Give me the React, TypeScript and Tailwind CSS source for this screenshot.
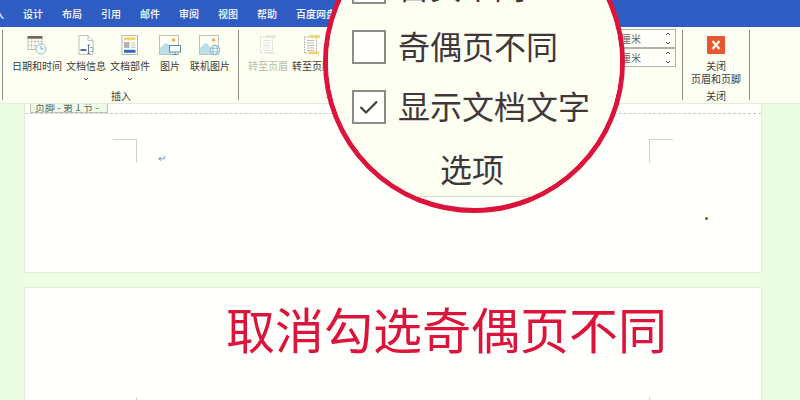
import { useState } from 'react'
import type { ReactNode } from 'react'

const TABS = ['插入', '设计', '布局', '引用', '邮件', '审阅', '视图', '帮助', '百度网盘']

function CalendarIcon() {
  return (
    <svg width="20" height="20" viewBox="0 0 20 20" fill="none">
      <path d="M1 3h14v11.500H1z" fill="#fffff8" stroke="#b4b4a8" strokeWidth="0.800" />
      <path d="M1 6.500h14M1 10.500h14M4.500 3v11.500M8 3v11.500M11.500 3v11.500" stroke="#c9b9a8" strokeWidth="0.600" />
      <path d="M0.500 1h15v2.600h-15z" fill="#6f6660" />
      <circle cx="14" cy="14" r="5" fill="#f8fffb" stroke="#94bfd4" strokeWidth="1" />
      <path d="M14 10.800V14h2.800" stroke="#7fa8bf" strokeWidth="1" />
    </svg>
  )
}

function DocInfoIcon() {
  return (
    <svg width="20" height="20" viewBox="0 0 20 20" fill="none">
      <path d="M3 0.500h9l5 5V19.500H3z" fill="#fffffb" stroke="#b5bbb3" strokeWidth="0.900" />
      <path d="M12 0.500v5h5" stroke="#b5bbb3" strokeWidth="0.900" />
      <path d="M4.500 15h6" stroke="#3b5f94" strokeWidth="1.800" />
      <path d="M12.500 10v8.500M11.500 10h2.500M11.500 18.500h2.500" stroke="#5f7482" strokeWidth="1" />
      <path d="M14 12.500h3v4h-3" stroke="#8ea0aa" strokeWidth="0.800" />
    </svg>
  )
}

function DocPartsIcon() {
  return (
    <svg width="20" height="20" viewBox="0 0 20 20" fill="none">
      <path d="M2 0.500h15.500v19H2z" fill="#fffffb" stroke="#a9b0aa" strokeWidth="0.900" />
      <path d="M4 2.300h11.500v3H4z" fill="#f4d56c" />
      <path d="M4 7h5.500v6H4z" fill="#b4b4b0" />
      <path d="M11 8h4.500M11 10.200h4.500M11 12.400h4.500" stroke="#b9b9ae" strokeWidth="0.800" />
      <path d="M4 14.800h11.500v3H4z" fill="#3767bd" />
    </svg>
  )
}

function PhotoBase() {
  return (
    <>
      <path d="M0.500 0.500h19v19H0.500z" fill="#fffff8" stroke="#b9bbb0" strokeWidth="0.900" />
      <circle cx="14.500" cy="5" r="1.800" fill="#f1b24c" />
      <path d="M1 19v-6l6-5.500 4 4 2 7.500z" fill="#b9dfea" />
    </>
  )
}

function PictureIcon() {
  return (
    <svg width="22" height="20" viewBox="0 0 22 20" fill="none">
      <PhotoBase />
      <path d="M10.500 10.500h11v6.500h-11z" fill="#fafffc" stroke="#5b8fb0" strokeWidth="1.100" />
      <path d="M16 17v2.400M13 19.400h6" stroke="#5b8fb0" strokeWidth="1" />
    </svg>
  )
}

function OnlinePictureIcon() {
  return (
    <svg width="22" height="20" viewBox="0 0 22 20" fill="none">
      <PhotoBase />
      <circle cx="16" cy="15" r="4.800" fill="#effaf8" stroke="#84b0c2" strokeWidth="0.900" />
      <ellipse cx="16" cy="15" rx="2.200" ry="4.800" stroke="#84b0c2" strokeWidth="0.800" />
      <path d="M11.500 13.300h9M11.500 16.700h9" stroke="#84b0c2" strokeWidth="0.800" />
    </svg>
  )
}

function GotoIcon({ band, line, bottom }: { band: string; line: string; bottom?: boolean }) {
  return (
    <svg width="18" height="20" viewBox="0 0 18 20" fill="none">
      <path d="M1.500 2h12v16h-12z" fill="#fffffb" stroke={line} strokeWidth="0.900" strokeDasharray="1.500 1" />
      <path d="M4 5.500h7M4 8h7M4 10.500h7M4 13h7M4 15.500h7" stroke={line} strokeWidth="0.700" />
      <path d="M6 0.200h11v2.600H6z" fill={band} />
      <path d={bottom ? 'M5 16.500h11v2.600H5z' : 'M7 17h9v1.600H7z'} fill={band} />
    </svg>
  )
}

function CloseIcon() {
  return (
    <svg width="18" height="20" viewBox="0 0 18 20" fill="none">
      <rect y="1" width="18" height="18" rx="1" fill="#e9552f" />
      <path d="M5.500 6l7 8M12.500 6l-7 8" stroke="#fff6ee" strokeWidth="2.400" />
    </svg>
  )
}

function Chevron({ up }: { up?: boolean }) {
  return (
    <svg width="6" height="4" viewBox="0 0 6 4" fill="none">
      <path d={up ? 'M1 3l2-2 2 2' : 'M1 1l2 2 2-2'} stroke="#4a4a48" strokeWidth="1" />
    </svg>
  )
}

interface ToolProps {
  icon: ReactNode
  label: string
  width?: string
  menu?: boolean
  disabled?: boolean
}

function Tool({ icon, label, width = 'w-10', menu, disabled }: ToolProps) {
  return (
    <button
      type="button"
      disabled={disabled}
      className={`flex shrink-0 flex-col items-center whitespace-nowrap disabled:text-[#b5bdae] ${width}`}
    >
      {icon}
      <span className="mt-1 leading-[14px]">{label}</span>
      {menu && (
        <span className="mt-1">
          <Chevron />
        </span>
      )}
    </button>
  )
}

function Group({ title, className, children }: { title: string; className: string; children: ReactNode }) {
  return (
    <section className={`flex h-[70px] flex-col border-l border-[#8b8f86] pt-[5px] ${className}`}>
      <div className="flex flex-1 gap-1">{children}</div>
      <h2 className="text-center leading-[8px]">{title}</h2>
    </section>
  )
}

function Spinner({ label, initial }: { label: string; initial: string }) {
  const [value, setValue] = useState(initial)
  return (
    <div className="flex h-[19px] w-24 items-center border border-[#b0b3aa] bg-[#fffffa] pr-1">
      <input
        aria-label={label}
        value={value}
        onChange={e => setValue(e.target.value)}
        className="min-w-0 flex-1 pr-6 text-right leading-[14px] text-[#666] outline-none"
      />
      <div className="flex flex-col gap-[5px]">
        <button type="button" aria-label="增加">
          <Chevron up />
        </button>
        <button type="button" aria-label="减少">
          <Chevron />
        </button>
      </div>
    </div>
  )
}

function Option({ label, initial = false }: { label: string; initial?: boolean }) {
  const [checked, setChecked] = useState(initial)
  return (
    <label className="flex h-[60px] items-center gap-3 whitespace-nowrap pl-6">
      <span className="grid shrink-0 place-items-center">
        <input
          type="checkbox"
          checked={checked}
          onChange={e => setChecked(e.target.checked)}
          className="col-start-1 row-start-1 size-[34px] appearance-none border-2 border-[#8a8c88] bg-[#fffffb]"
        />
        {checked && (
          <svg className="pointer-events-none col-start-1 row-start-1" width="20" height="16" viewBox="0 0 20 16" fill="none">
            <path d="M1.500 8l5.500 5.500L18 2.500" stroke="#463c3e" strokeWidth="2.200" />
          </svg>
        )}
      </span>
      <span className="pb-1 leading-[46px]">{label}</span>
    </label>
  )
}

function Lens() {
  return (
    <div className="absolute -top-[89px] left-[323px] size-[302px] overflow-hidden rounded-full border-[5px] border-[#dc143c] bg-[#fffffb] text-[32px] text-[#41373a]">
      <div className="border-b border-[#cfe6cb] bg-[#fcfff2] pt-[41px]">
        <Option label="首页不同" initial />
        <Option label="奇偶页不同" />
        <Option label="显示文档文字" initial />
        <h2 className="mt-2 h-[51px] pr-1 text-center leading-[46px]">选项</h2>
      </div>
    </div>
  )
}

export default function App() {
  return (
    <div className="relative flex h-screen flex-col overflow-hidden bg-[#ebfde3] font-['Noto_Sans_CJK_SC',sans-serif] text-[10px] text-[#3c3c3a]">
      <nav className="-ml-4 flex h-[27px] shrink-0 items-center gap-[19px] bg-[#2f5cc2] font-medium leading-[14px] text-white">
        {TABS.map(tab => (
          <button key={tab} type="button" className="shrink-0">
            {tab}
          </button>
        ))}
      </nav>

      <div className="flex h-[77px] shrink-0 border-b border-[#e1eddb] bg-[#fcfff2] pl-0.5 pt-[3px]">
        <Group title="插入" className="pl-[9px] pr-2">
          <Tool icon={<CalendarIcon />} label="日期和时间" width="w-[50px]" />
          <Tool icon={<DocInfoIcon />} label="文档信息" menu />
          <Tool icon={<DocPartsIcon />} label="文档部件" menu />
          <Tool icon={<PictureIcon />} label="图片" width="w-8" />
          <Tool icon={<OnlinePictureIcon />} label="联机图片" />
        </Group>
        <Group title="导航" className="w-[186px] pl-[9px]">
          <Tool icon={<GotoIcon band="#e3e5da" line="#cfd4c8" />} label="转至页眉" disabled />
          <Tool icon={<GotoIcon band="#f3d36b" line="#9aa09a" bottom />} label="转至页脚" />
        </Group>
        <div className="-mt-px flex flex-1 flex-col items-end pr-1.5">
          <Spinner label="页眉顶端距离" initial="1.5 厘米" />
          <Spinner label="页脚底端距离" initial="1.75 厘米" />
        </div>
        <Group title="关闭" className="mr-[50px] w-[68px] border-r px-2">
          <button type="button" className="flex w-[50px] flex-col items-center whitespace-nowrap">
            <CloseIcon />
            <span className="mt-1 leading-[13px]">关闭</span>
            <span className="leading-[13px]">页眉和页脚</span>
          </button>
        </Group>
      </div>

      <main className="flex min-h-0 flex-1 flex-col gap-[14px] pl-6 pr-[38px]">
        <article className="h-[169px] shrink-0 border-x border-b border-[#e0efda] bg-[#fffffc]">
          <div className="flex h-[10px] items-end overflow-hidden border-b border-dashed border-[#c6cac4] pl-[5px]">
            <span className="w-[78px] border border-[#b9c4b4] bg-[#effbe9] pl-1 leading-[10px] text-[#5d665a]">
              页脚 - 第 1 节 -
            </span>
          </div>
          <div className="mt-[25px] flex px-[88px]">
            <div className="size-6 border-r border-t border-[#cdd1ca]" />
            <span className="ml-[21px] mt-3 leading-[14px] text-[#8c8c8c]">↵</span>
            <div className="ml-auto size-6 border-l border-t border-[#cdd1ca]" />
          </div>
          <div className="ml-auto mr-[53px] mt-[52px] size-[3px] rounded-full bg-[#a8431f]" />
        </article>

        <article className="flex flex-1 flex-col border-x border-t border-[#e0efda] bg-[#fffffc]">
          <h1 className="mt-2 whitespace-nowrap pl-[107px] text-center text-[49px] leading-[64px] text-[#dc143c]">
            取消勾选奇偶页不同
          </h1>
          <div className="mt-auto flex justify-between px-[111px]">
            <div className="h-[3px] w-px bg-[#cdd1ca]" />
            <div className="h-[3px] w-px bg-[#cdd1ca]" />
          </div>
        </article>
      </main>

      <Lens />
    </div>
  )
}
